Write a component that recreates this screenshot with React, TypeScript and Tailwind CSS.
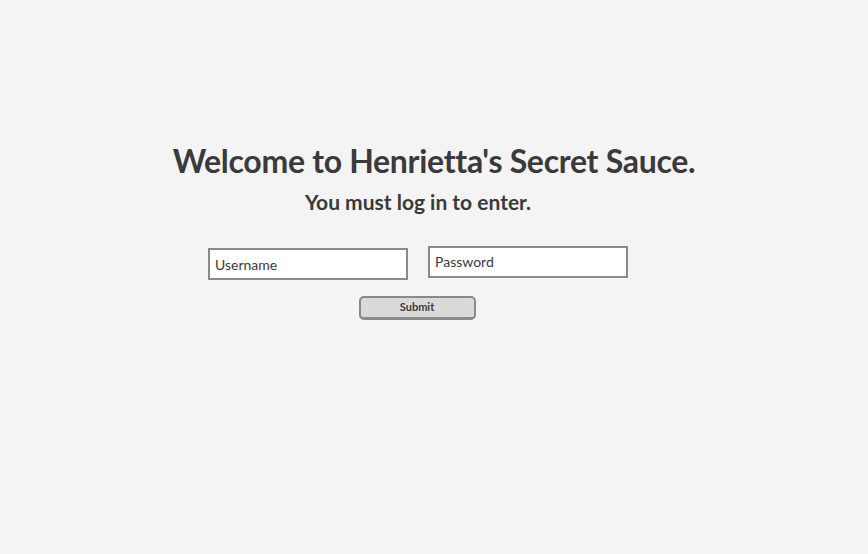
export default function App() {
  return (
    <div
      className="h-[554px] w-full bg-[#f4f4f4] text-[#3a3a3a] overflow-hidden"
      style={{ fontFamily: "Lato, 'Open Sans', sans-serif" }}
    >
      <h1 className="pt-[141px] text-center text-[32px] font-bold leading-[40px] tracking-[-0.3px]">
        Welcome to Henrietta's Secret Sauce.
      </h1>
      <div className="pr-[32px]">
        <p className="mt-[8px] text-center text-[21px] font-bold leading-[26px]">
          You must log in to enter.
        </p>
        <form className="mt-[31px] flex flex-col items-center" onSubmit={(e) => e.preventDefault()}>
          <div className="flex items-start gap-[20px]">
            <input
              className="mt-[2px] h-[32px] w-[200px] border-2 border-[#8a8a8a] bg-white px-[5px] text-[14px] text-[#3a3a3a] outline-none placeholder:text-[#3a3a3a]"
              placeholder="Username"
            />
            <input
              type="password"
              className="h-[32px] w-[200px] border-2 border-[#8a8a8a] bg-white px-[5px] pb-[2px] text-[14px] text-[#3a3a3a] outline-none placeholder:text-[#3a3a3a]"
              placeholder="Password"
            />
          </div>
          <button
            type="submit"
            className="mt-[16px] mr-[2px] h-[24px] w-[117px] rounded-[5px] border-2 border-b-[3px] border-[#8a8a8a] bg-[#dadada] text-[11px] font-bold text-[#3a3a3a]"
          >
            Submit
          </button>
        </form>
      </div>
    </div>
  );
}
